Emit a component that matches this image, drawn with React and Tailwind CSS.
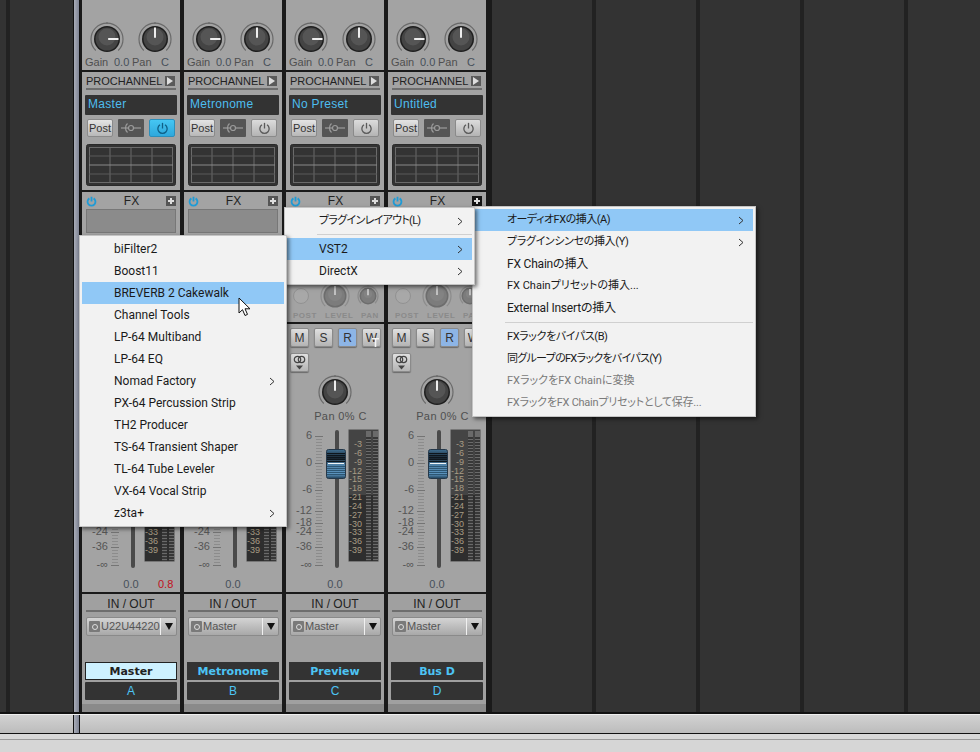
const strips = [
  { preset: "Master", name: "Master", letter: "A", out: "U22U44220", active: true, selected: true, peak: "0.8" },
  { preset: "Metronome", name: "Metronome", letter: "B", out: "Master" },
  { preset: "No Preset", name: "Preview", letter: "C", out: "Master" },
  { preset: "Untitled", name: "Bus D", letter: "D", out: "Master", plusDark: true },
]

const menuLeft = ["biFilter2", "Boost11", "BREVERB 2 Cakewalk", "Channel Tools", "LP-64 Multiband", "LP-64 EQ", "Nomad Factory", "PX-64 Percussion Strip", "TH2 Producer", "TS-64 Transient Shaper", "TL-64 Tube Leveler", "VX-64 Vocal Strip", "z3ta+"]
const scale = [
  ["6", 27], ["0", 27], ["-6", 21], ["-12", 12], ["-18", 9], ["-24", 15], ["-36", 18], ["-∞", 10],
]
const meterLabels = ["-3", "-6", "-9", "-12", "-15", "-18", "-21", "-24", "-27", "-30", "-33", "-36", "-39"]
const majorTicks = [7, 34, 61, 82, 94, 103, 118, 136]

const Knob = ({ size = 34, angle = 0, r = 11.5, ring = 16, dim = false }) => {
  const c = size / 2
  const a = (angle - 90) * Math.PI / 180
  return (
    <svg width={size} height={size} viewBox={`0 0 ${size} ${size}`} className={dim ? "opacity-40" : ""}>
      <path d={`M ${c - ring * 0.7} ${c + ring * 0.72} A ${ring} ${ring} 0 1 1 ${c + ring * 0.7} ${c + ring * 0.72}`} fill="none" stroke="#6a6a6a" strokeWidth="1.2" />
      <line x1={c} y1={c - ring - 1} x2={c} y2={c - ring + 1} stroke="#666" />
      <circle cx={c} cy={c} r={r + 1.5} fill="#1e1e1e" />
      <circle cx={c} cy={c} r={r} fill="#444" />
      <circle cx={c} cy={c - 2} r={r - 3} fill="#555" />
      <line x1={c + Math.cos(a) * (r * 0.1)} y1={c + Math.sin(a) * (r * 0.1)} x2={c + Math.cos(a) * r} y2={c + Math.sin(a) * r} stroke="#eee" strokeWidth="2" />
    </svg>
  )
}

const PowerIcon = ({ color = "#555", size = 13, weight = 1.2 }) => (
  <svg width={size} height={size} viewBox="0 0 12 12" fill="none" stroke={color} strokeWidth={weight}>
    <path d="M3.7 2.6 A4.3 4.3 0 1 0 8.3 2.6" />
    <line x1="6" y1="0.8" x2="6" y2="6" />
  </svg>
)

const LinkIcon = () => (
  <svg width="22" height="12" viewBox="0 0 22 12" fill="none" stroke="#9c9c9c" strokeWidth="1.2">
    <line x1="1" y1="6" x2="8" y2="6" />
    <circle cx="11" cy="6" r="2.5" />
    <path d="M7.5 1.5 A6 6 0 0 0 7.5 10.5" />
    <line x1="14" y1="6" x2="21" y2="6" />
  </svg>
)

const EqGrid = () => (
  <svg width="90" height="42" viewBox="0 0 90 42" className="block">
    <rect x="0.5" y="0.5" width="89" height="41" rx="2" fill="#333" stroke="#2a2a2a" />
    <rect x="3.5" y="3.5" width="83" height="35" fill="none" stroke="#6b6b6b" />
    <line x1="24" y1="3" x2="24" y2="39" stroke="#6b6b6b" />
    <line x1="45" y1="3" x2="45" y2="39" stroke="#6b6b6b" />
    <line x1="66" y1="3" x2="66" y2="39" stroke="#6b6b6b" />
    <line x1="3" y1="12" x2="87" y2="12" stroke="#5a5a5a" />
    <line x1="3" y1="21" x2="87" y2="21" stroke="#8a8a8a" />
    <line x1="3" y1="30" x2="87" y2="30" stroke="#5a5a5a" />
  </svg>
)

const ScaleTicks = () => {
  const minor = []
  for (let y = 7; y <= 136; y += 3) minor.push(y)
  return (
    <svg width="8" height="139" viewBox="0 0 8 139" className="block">
      {minor.map((y) => <line key={y} x1="1" x2="7" y1={y + 0.5} y2={y + 0.5} stroke="#8c8c8c" />)}
      {majorTicks.map((y) => <line key={y} x1="0" x2="8" y1={y + 0.5} y2={y + 0.5} stroke="#747474" />)}
    </svg>
  )
}

const FaderCap = () => (
  <svg width="20" height="30" viewBox="0 0 20 30" className="block">
    <defs>
      <linearGradient id="capGrad" x1="0" y1="0" x2="0" y2="1">
        <stop offset="0" stopColor="#3f6f92" />
        <stop offset="0.3" stopColor="#17222c" />
        <stop offset="0.5" stopColor="#4d7fa5" />
        <stop offset="0.85" stopColor="#5b93bd" />
        <stop offset="1" stopColor="#1d3d55" />
      </linearGradient>
    </defs>
    <rect x="0.5" y="0.5" width="19" height="29" rx="2" fill="url(#capGrad)" stroke="#25384a" />
    {[4, 6, 8, 10, 12, 17, 19, 21, 23, 25].map((y) => (
      <line key={y} x1="1" x2="19" y1={y + 0.5} y2={y + 0.5} stroke={y < 13 ? "#0e161d" : "#2d5673"} />
    ))}
    <line x1="2" x2="18" y1="14.5" y2="14.5" stroke="#f2f6f8" />
  </svg>
)

const SmallBtn = ({ children, on }) => (
  <div className={`w-[19px] h-[19px] rounded-[2px] border border-[#8a8a8a] flex items-center justify-center text-[12px] text-[#333] shadow-[0_1px_1px_rgba(0,0,0,0.35)] ${on ? "bg-[#8db5e6]" : "bg-gradient-to-b from-[#e0e0e0] to-[#b4b4b4]"}`}>
    {children}
  </div>
)

const MeterBar = ({ ml }) => (
  <div className={`${ml} mt-[1px] w-[5px] h-[130px] flex flex-col`}>
    <div className="h-[5px] bg-[#6a6a6a]" />
    <div className="flex-1 bg-[repeating-linear-gradient(to_bottom,#6a6a6a_0,#6a6a6a_1px,#383838_1px,#383838_3px)]" />
  </div>
)

const Strip = ({ s }) => (
  <div className="w-[98px] shrink-0 flex flex-col gap-[2px] font-['Liberation_Sans',sans-serif]">
    {/* gain / pan */}
    <section className="h-[70px] bg-[#a3a3a3] flex flex-col">
      <div className="flex pt-[22px] pl-[8px] gap-[14px]">
        <Knob angle={90} />
        <Knob angle={0} />
      </div>
      <div className="flex text-[11px] leading-[13px] text-[#4f4f4f] pl-[3px]">
        <span className="w-[29px]">Gain</span>
        <span className="w-[18px] text-[#47505a]">0.0</span>
        <span className="w-[29px]">Pan</span>
        <span className="text-[#47505a]">C</span>
      </div>
    </section>

    {/* prochannel */}
    <section className="h-[118px] bg-[#a3a3a3] px-[3px]">
      <div className="flex items-center justify-between h-[16px] mt-[1px] mx-[1px] pr-[1px]">
        <span className="text-[11px] leading-none text-[#222]">PROCHANNEL</span>
        <div className="w-[10px] h-[10px] bg-[#5a5a5a] flex items-center justify-center">
          <svg width="6" height="8" viewBox="0 0 6 8"><path d="M0 0 L6 4 L0 8 Z" fill="#ddd" /></svg>
        </div>
      </div>
      <div className="h-[2px] mx-[1px] mt-[-1px] mb-[5px] bg-[#6e6e6e] w-[90px]" />
      <div className="h-[20px] w-[92px] rounded-[1px] bg-[#333] text-[#4dbdf0] text-[12px] leading-[19px] pl-[3px] tracking-[0.3px]">{s.preset}</div>
      <div className="flex gap-[5px] mt-[4px] ml-[2px]">
        <div className="w-[26px] h-[18px] rounded-[2px] bg-gradient-to-b from-[#e4e4e4] to-[#b8b8b8] border border-[#8a8a8a] text-[11px] leading-[16px] text-center text-[#333]">Post</div>
        <div className="w-[26px] h-[18px] rounded-[1px] bg-[#555] flex items-center justify-center"><LinkIcon /></div>
        <div className={`w-[26px] h-[18px] rounded-[2px] flex items-center justify-center border ${s.active ? "bg-gradient-to-b from-[#45c6f3] to-[#2fa8dc] border-[#2b8fbb]" : "bg-gradient-to-b from-[#dcdcdc] to-[#b4b4b4] border-[#8a8a8a]"}`}>
          <PowerIcon color={s.active ? "#0f5f86" : "#5a5a5a"} />
        </div>
      </div>
      <div className="mt-[7px] ml-[1px]"><EqGrid /></div>
    </section>

    {/* fx rack */}
    <section className="h-[130px] bg-[#a3a3a3] px-[4px] overflow-hidden">
      <div className="flex items-center justify-between h-[17px] pt-[1px]">
        <PowerIcon color="#1f9bd6" size={11} weight={2} />
        <span className="text-[12px] leading-none text-[#222]">FX</span>
        <div className={`w-[10px] h-[10px] flex items-center justify-center ${s.plusDark ? "bg-[#151515]" : "bg-[#555]"}`}>
          <svg width="8" height="8" viewBox="0 0 8 8"><path d="M3 1h2v2h2v2H5v2H3V5H1V3h2z" fill="#ddd" /></svg>
        </div>
      </div>
      <div className="h-[24px] w-[90px] bg-[#8b8b8b] border border-[#777]" />
      <div className="flex items-center mt-[49px] pl-[3px] h-[28px]">
        <div className="w-[16px] h-[16px] shrink-0 rounded-full bg-[#a8a8a8] border border-[#929292]" />
        <div className="ml-[10px]"><Knob size={32} angle={0} r={10} ring={14} dim /></div>
        <div className="ml-[5px]"><Knob size={24} angle={0} r={7} ring={10} dim /></div>
      </div>
      <div className="flex pl-[3px] text-[8px] font-bold leading-[10px] tracking-[0.5px] text-[#8a8a8a] mt-[1px]">
        <span className="w-[32px]">POST</span>
        <span className="w-[36px]">LEVEL</span>
        <span>PAN</span>
      </div>
    </section>

    {/* fader */}
    <section className="h-[268px] bg-[#a3a3a3] flex flex-col">
      <div className="flex gap-[5px] mt-[4px] ml-[4px]">
        <SmallBtn>M</SmallBtn>
        <SmallBtn>S</SmallBtn>
        <SmallBtn on>R</SmallBtn>
        <SmallBtn>W</SmallBtn>
      </div>
      <div className="mt-[6px] ml-[4px] w-[19px]">
        <SmallBtn>
          <svg width="13" height="15" viewBox="0 0 13 15" fill="none" stroke="#444" strokeWidth="1.2">
            <circle cx="4.5" cy="4.5" r="3.2" />
            <circle cx="8.5" cy="4.5" r="3.2" />
            <path d="M3 10.5 H10 L6.5 14.5 Z" fill="#444" stroke="none" />
          </svg>
        </SmallBtn>
      </div>
      <div className="flex justify-center mt-[3px]"><Knob angle={0} /></div>
      <div className="text-center text-[11px] leading-[13px] tracking-[0.4px] text-[#4f4f4f] mt-[1px] pl-[11px]">Pan 0% C</div>
      <div className="flex mt-[6px] h-[139px]">
        <div className="w-[26px] pt-[1px] text-right text-[11px] leading-[11px] text-[#555]">
          {scale.map(([label, h]) => (
            <div key={label} style={{ height: h }}>{label}</div>
          ))}
        </div>
        <div className="ml-[3px] w-[8px]"><ScaleTicks /></div>
        <div className="relative w-[23px] ml-[2px] flex justify-center">
          <div className="w-[4px] h-[138px] mt-[1px] rounded-[2px] bg-[#4a4a4a]" />
          <div className="absolute left-[1px] top-[20px]"><FaderCap /></div>
        </div>
        <div className="w-[31px] h-[133px] border border-[#777] rounded-[1px] bg-gradient-to-b from-[#444] from-50% to-[#2e2e2e] to-50% flex">
          <div className="w-[13px] pt-[10px] text-right text-[9px] leading-[8.85px] text-[#a89c84]">
            {meterLabels.map((l) => <div key={l} className="h-[8.85px]">{l}</div>)}
          </div>
          <MeterBar ml="ml-[4px]" />
          <MeterBar ml="ml-[2px]" />
        </div>
      </div>
      <div className="flex mt-[10px] text-[11px] leading-[13px] text-[#47505a]">
        <span className="w-[98px] text-center">0.0</span>
        {s.peak && <span className="ml-[-22px] text-[#c01020]">{s.peak}</span>}
      </div>
    </section>

    {/* in / out */}
    <section className="h-[118px] bg-[#a0a0a0] flex flex-col">
      <div className="text-center text-[12px] leading-[14px] text-[#222] mt-[3px]">IN / OUT</div>
      <div className="h-[2px] w-[90px] ml-[4px] mt-[-1px] bg-[#6e6e6e]" />
      <div className="flex w-[91px] h-[19px] ml-[4px] mt-[5px] rounded-[2px] border border-[#8a8a8a] bg-gradient-to-b from-[#d4d4d4] to-[#a8a8a8]">
        <div className="flex-1 flex items-center pl-[2px] gap-[1px] overflow-hidden border-r border-[#f0f0f0]">
          <div className="w-[11px] h-[11px] shrink-0 rounded-[1px] bg-[#7a7a7a] flex items-center justify-center">
            <div className="w-[6px] h-[6px] rounded-full border border-[#ddd]" />
          </div>
          <span className="text-[11px] text-[#555] whitespace-nowrap">{s.out}</span>
        </div>
        <div className="w-[15px] flex items-center justify-center">
          <svg width="8" height="7" viewBox="0 0 8 7"><path d="M0 0 H8 L4 7 Z" fill="#111" /></svg>
        </div>
      </div>
      <div className={`mt-[26px] ml-[3px] w-[92px] h-[18px] text-center font-['DejaVu_Sans',sans-serif] font-bold text-[11px] ${s.selected ? "bg-[#cdf1ff] border border-[#222] leading-[17px] text-[#222]" : "bg-[#333] leading-[19px] text-[#4dc4f4]"}`}>{s.name}</div>
      <div className="mt-[2px] ml-[3px] w-[92px] h-[18px] bg-[#333] rounded-[1px] text-center text-[12px] leading-[18px] text-[#4dc4f4]">{s.letter}</div>
      <div className="mt-[4px] flex-1 bg-[#8a8a8a]" />
    </section>
  </div>
)

const Chevron = () => (
  <svg width="6" height="9" viewBox="0 0 6 9" fill="none" stroke="#333" strokeWidth="1" className="shrink-0">
    <path d="M1 1 L5 4.5 L1 8" />
  </svg>
)

const MenuRow = ({ label, hl, arrow, disabled, fit = "" }) => (
  <div className={`h-[22px] flex items-center justify-between pl-[32px] pr-[9px] ${hl ? "bg-[#90c8f6]" : ""} ${disabled ? "text-[#7a7a7a]" : "text-[#1a1a1a]"}`}>
    <span className={`whitespace-nowrap ${fit}`}>{label}</span>
    {arrow && <Chevron />}
  </div>
)

const menuClass = "absolute bg-[#f2f2f2] border border-[#c4c4c4] p-[2px] shadow-[2px_2px_4px_rgba(0,0,0,0.55)] text-[12px] [font-feature-settings:'palt'] font-['Roboto','Noto_Sans_CJK_JP',sans-serif]"

export default function App() {
  return (
    <div className="relative w-[980px] h-[752px] overflow-hidden bg-[#d6d6d6]">
      <div className="flex h-[712px] bg-[#333]">
        <div className="w-[6px] shrink-0" />
        <div className="w-[4px] shrink-0 bg-[#222]" />
        <div className="w-[63px] shrink-0" />
        <div className="w-[9px] shrink-0 flex">
          <div className="w-[1px] bg-[#111]" />
          <div className="w-[5px] bg-gradient-to-r from-[#a9adb8] to-[#7f8494]" />
          <div className="w-[1px] bg-[#111]" />
          <div className="w-[2px] bg-[#1a1a1a]" />
        </div>
        <div className="flex gap-[4px] bg-[#1a1a1a] pr-[6px]">
          {strips.map((s) => <Strip key={s.letter} s={s} />)}
        </div>
        {[0, 1, 2, 3, 4].map((i) => (
          <div key={i} className="w-[104px] shrink-0 flex justify-end">
            <div className="w-[4px] bg-[#222]" />
          </div>
        ))}
      </div>
      <div className="h-[2px] bg-[#111]" />
      <div className="h-[19px] border-t border-[#eee] bg-gradient-to-b from-[#d2d2d2] to-[#bcbcbc] flex">
        <div className="w-[73px]" />
        <div className="w-[7px] flex">
          <div className="w-[1px] bg-[#111]" />
          <div className="w-[5px] bg-gradient-to-r from-[#a9adb8] to-[#7f8494]" />
          <div className="w-[1px] bg-[#111]" />
        </div>
      </div>
      <div className="h-[1px] bg-[#111]" />
      <div className="h-[5px] bg-[#d8d8d8]" />
      <div className="h-[1px] bg-[#9a9a9a]" />

      {/* right submenu */}
      <div className={`${menuClass} left-[472px] top-[206px] w-[284px]`}>
        <MenuRow label="オーディオFXの挿入(A)" hl arrow fit="text-[11px] tracking-[-0.5px]" />
        <MenuRow label="プラグインシンセの挿入(Y)" arrow fit="text-[11px] tracking-[-0.35px]" />
        <MenuRow label="FX Chainの挿入" fit="tracking-[-0.2px]" />
        <MenuRow label="FX Chainプリセットの挿入..." fit="text-[11px]" />
        <MenuRow label="External Insertの挿入" fit="tracking-[-0.2px]" />
        <div className="h-[1px] bg-[#d0d0d0] ml-[30px] my-[3px]" />
        <MenuRow label="FXラックをバイパス(B)" fit="text-[11px] tracking-[-0.4px]" />
        <MenuRow label="同グループのFXラックをバイパス(Y)" fit="text-[11px] tracking-[-0.7px]" />
        <MenuRow label="FXラックをFX Chainに変換" disabled fit="text-[11px]" />
        <MenuRow label="FXラックをFX Chainプリセットとして保存..." disabled fit="text-[11px] tracking-[-0.25px]" />
      </div>

      {/* middle submenu */}
      <div className={`${menuClass} left-[284px] top-[207px] w-[191px]`}>
        <MenuRow label="プラグインレイアウト(L)" arrow fit="text-[11px] tracking-[-0.7px]" />
        <div className="h-[1px] bg-[#d0d0d0] ml-[30px] mt-[2px] mb-[3px]" />
        <MenuRow label="VST2" hl arrow />
        <MenuRow label="DirectX" arrow />
      </div>

      {/* plugin list */}
      <div className={`${menuClass} left-[79px] top-[235px] w-[208px]`}>
        {menuLeft.map((m) => (
          <MenuRow key={m} label={m} hl={m === "BREVERB 2 Cakewalk"} arrow={m === "Nomad Factory" || m === "z3ta+"} />
        ))}
      </div>

      {/* mouse pointer */}
      <svg width="14" height="21" viewBox="0 0 14 21" className="absolute left-[238px] top-[297px]">
        <path d="M1 1 L1 16 L4.5 12.7 L7 18.5 L9.5 17.4 L7 11.8 L12 11.8 Z" fill="#fff" stroke="#111" strokeWidth="1" />
      </svg>
      {/* small marker beside the W button */}
      <svg width="7" height="9" viewBox="0 0 7 9" className="absolute left-[372px] top-[338px]">
        <path d="M0 0 H7 V1.5 H4.3 V9 H2.7 V1.5 H0 Z" fill="#f4f4f4" />
      </svg>
    </div>
  )
}
